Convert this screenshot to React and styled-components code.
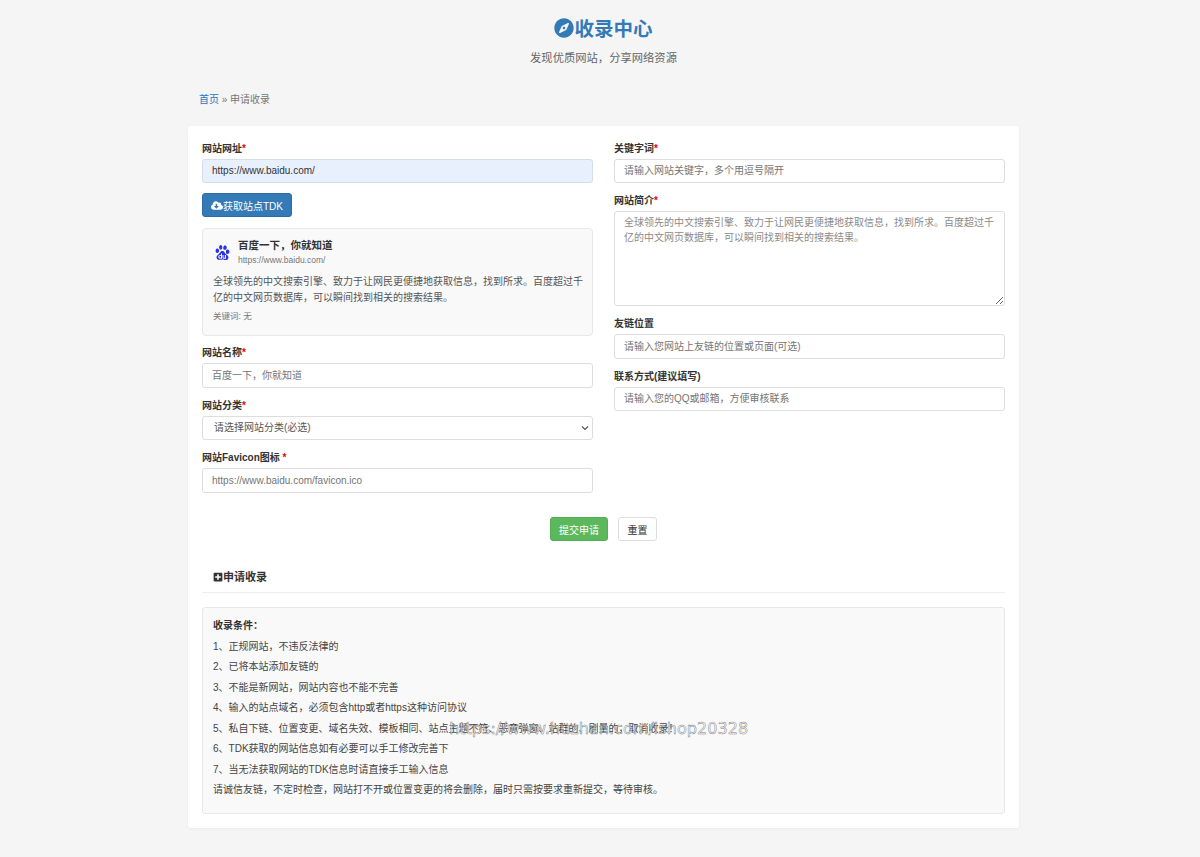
import React from 'react';
import styled, { createGlobalStyle } from 'styled-components';
import { FaCompass, FaCloudDownloadAlt, FaPlusSquare } from 'react-icons/fa';
import { SiBaidu } from 'react-icons/si';

const DESC = '全球领先的中文搜索引擎、致力于让网民更便捷地获取信息，找到所求。百度超过千亿的中文网页数据库，可以瞬间找到相关的搜索结果。';

const RULES = [
  '1、正规网站，不违反法律的',
  '2、已将本站添加友链的',
  '3、不能是新网站，网站内容也不能不完善',
  '4、输入的站点域名，必须包含http或者https这种访问协议',
  '5、私自下链、位置变更、域名失效、模板相同、站点主题不符、恶意弹窗、站群的、刷量的，取消收录！',
  '6、TDK获取的网站信息如有必要可以手工修改完善下',
  '7、当无法获取网站的TDK信息时请直接手工输入信息',
  '请诚信友链，不定时检查，网站打不开或位置变更的将会删除，届时只需按要求重新提交，等待审核。',
];

const App = () => (
  <>
    <GlobalStyle />
    <Page>
      <Header>
        <SiteTitle>
          <FaCompass size={20} />
          收录中心
        </SiteTitle>
        <Slogan>发现优质网站，分享网络资源</Slogan>
      </Header>

      <Breadcrumb>
        <a href="#home">首页</a>
        {' » 申请收录'}
      </Breadcrumb>

      <Card>
        <FormGrid>
          <Column>
            <Field $gap={10}>
              <Label>网站网址<Star>*</Star></Label>
              <Input $filled defaultValue="https://www.baidu.com/" />
            </Field>
            <FetchButton type="button">
              <FaCloudDownloadAlt size={13} />
              获取站点TDK
            </FetchButton>
            <Preview>
              <PreviewHead>
                <SiBaidu size={15} color="#2932e1" />
                <div>
                  <PreviewTitle>百度一下，你就知道</PreviewTitle>
                  <PreviewUrl>https://www.baidu.com/</PreviewUrl>
                </div>
              </PreviewHead>
              <PreviewDesc>{DESC}</PreviewDesc>
              <PreviewKeywords>关键词: 无</PreviewKeywords>
            </Preview>
            <Field>
              <Label>网站名称<Star>*</Star></Label>
              <Input placeholder="百度一下，你就知道" />
            </Field>
            <Field>
              <Label>网站分类<Star>*</Star></Label>
              <Select defaultValue="">
                <option value="">请选择网站分类(必选)</option>
              </Select>
            </Field>
            <Field>
              <Label>网站Favicon图标 <Star>*</Star></Label>
              <Input placeholder="https://www.baidu.com/favicon.ico" />
            </Field>
          </Column>

          <Column>
            <Field>
              <Label>关键字词<Star>*</Star></Label>
              <Input placeholder="请输入网站关键字，多个用逗号隔开" />
            </Field>
            <Field>
              <Label>网站简介<Star>*</Star></Label>
              <Textarea placeholder={DESC} />
            </Field>
            <Field>
              <Label>友链位置</Label>
              <Input placeholder="请输入您网站上友链的位置或页面(可选)" />
            </Field>
            <Field>
              <Label>联系方式(建议填写)</Label>
              <Input placeholder="请输入您的QQ或邮箱，方便审核联系" />
            </Field>
          </Column>
        </FormGrid>

        <Actions>
          <SubmitButton type="button">提交申请</SubmitButton>
          <ResetButton type="button">重置</ResetButton>
        </Actions>

        <SectionTitle>
          <FaPlusSquare size={10} />
          申请收录
        </SectionTitle>

        <Notice>
          <NoticeLine><strong>收录条件：</strong></NoticeLine>
          {RULES.map((rule) => <NoticeLine key={rule}>{rule}</NoticeLine>)}
        </Notice>
      </Card>

      <Watermark>https://www.huzhan.com/ishop20328</Watermark>
    </Page>
  </>
);

const GlobalStyle = createGlobalStyle`
  html, body {
    margin: 0;
    background: #f5f5f5;
  }

  body {
    font-family: "Liberation Sans", "Noto Sans CJK SC", sans-serif;
    font-size: 10px;
    color: #333;
  }

  * {
    box-sizing: border-box;
  }
`;

const Page = styled.div`
  position: relative;
  width: 1200px;
  height: 857px;
  padding: 0 181px 0 188px;
  overflow: hidden;
`;

const Header = styled.header`
  padding-top: 14px;
  text-align: center;
`;

const SiteTitle = styled.h1`
  display: flex;
  justify-content: center;
  align-items: center;
  height: 27px;
  margin: 0;
  font-size: 19.5px;
  font-weight: 700;
  color: #337ab7;
`;

const Slogan = styled.p`
  margin: 9px 0 0;
  font-size: 11.3px;
  line-height: 16px;
  color: #666;
`;

const Breadcrumb = styled.nav`
  margin-top: 27px;
  padding-left: 11px;
  line-height: 14px;
  color: #777;

  a {
    color: #2a74b8;
    text-decoration: none;
  }
`;

const Card = styled.main`
  height: 702px;
  margin-top: 19px;
  padding: 15.5px 14px 14px;
  background: #fff;
  border-radius: 3px;
  box-shadow: 0 1px 3px rgba(0, 0, 0, 0.05);
`;

const FormGrid = styled.div`
  display: grid;
  grid-template-columns: 391px 391px;
  column-gap: 21px;
`;

const Column = styled.div`
  display: flex;
  flex-direction: column;
`;

const Field = styled.div`
  margin-bottom: ${(props) => props.$gap ?? 11}px;
`;

const Label = styled.label`
  display: block;
  margin-bottom: 3px;
  line-height: 14px;
  font-weight: 700;
  color: #333;
`;

const Star = styled.span`
  color: #e00;
`;

const Input = styled.input`
  display: block;
  width: 100%;
  height: 24.5px;
  padding: 0 9px;
  font: inherit;
  color: #333;
  background: ${(props) => (props.$filled ? '#e8f0fe' : '#fff')};
  border: 1px solid ${(props) => (props.$filled ? '#d6dde8' : '#ddd')};
  border-radius: 3px;
  outline: none;

  &::placeholder {
    color: #757575;
  }
`;

const Select = styled.select`
  display: block;
  width: 100%;
  height: 24.5px;
  padding: 0 11px;
  font: inherit;
  color: #555;
  appearance: none;
  background: #fff url("data:image/svg+xml,%3Csvg xmlns='http://www.w3.org/2000/svg' width='8' height='6'%3E%3Cpath d='M1 1.5l3 3 3-3' fill='none' stroke='%23555' stroke-width='1.2'/%3E%3C/svg%3E") no-repeat right 3px center;
  border: 1px solid #ddd;
  border-radius: 3px;
  outline: none;
`;

const Textarea = styled.textarea`
  display: block;
  width: 100%;
  height: 95px;
  padding: 3px 9px;
  font: inherit;
  line-height: 15px;
  color: #333;
  background: #fff;
  border: 1px solid #ddd;
  border-radius: 3px;
  outline: none;

  &::placeholder {
    color: #8a8a8a;
  }
`;

const FetchButton = styled.button`
  display: flex;
  align-items: center;
  width: 90px;
  height: 24px;
  padding: 0 8px;
  font: inherit;
  color: #fff;
  white-space: nowrap;
  background: #337ab7;
  border: 1px solid #2e6da4;
  border-radius: 3px;
`;

const Preview = styled.section`
  height: 108px;
  margin: 11px 0 10px;
  padding: 9px 9px 9px 10px;
  background: #f9f9f9;
  border: 1px solid #e8e8e8;
  border-radius: 4px;
`;

const PreviewHead = styled.div`
  display: flex;
  align-items: center;
  gap: 8px;
  padding-left: 2px;
`;

const PreviewTitle = styled.div`
  font-size: 10.5px;
  line-height: 15px;
  font-weight: 700;
  color: #333;
`;

const PreviewUrl = styled.div`
  margin-top: 1px;
  font-size: 8.5px;
  line-height: 12px;
  color: #777;
`;

const PreviewDesc = styled.p`
  margin: 8px 0 0;
  line-height: 15.5px;
  color: #555;
`;

const PreviewKeywords = styled.div`
  margin-top: 5px;
  font-size: 8.5px;
  line-height: 12px;
  color: #777;
`;

const Actions = styled.div`
  display: flex;
  justify-content: center;
  gap: 10px;
  margin-top: 13.5px;
`;

const SubmitButton = styled.button`
  width: 58px;
  height: 24px;
  padding: 0;
  font: inherit;
  color: #fff;
  background: #5cb85c;
  border: 1px solid #55ad55;
  border-radius: 3px;
`;

const ResetButton = styled.button`
  width: 39px;
  height: 24px;
  padding: 0;
  font: inherit;
  color: #333;
  background: #fff;
  border: 1px solid #ddd;
  border-radius: 3px;
`;

const SectionTitle = styled.h2`
  display: flex;
  align-items: center;
  margin: 28px 0 14px;
  padding: 0 11px 7px;
  font-size: 11px;
  line-height: 16px;
  font-weight: 700;
  color: #333;
  border-bottom: 1px solid #eee;
`;

const Notice = styled.section`
  height: 207px;
  padding: 8px 10px;
  background: #f9f9f9;
  border: 1px solid #e8e8e8;
  border-radius: 3px;
`;

const NoticeLine = styled.div`
  line-height: 20.5px;
  color: #444;

  strong {
    color: #333;
  }
`;

const Watermark = styled.div`
  position: absolute;
  left: 449px;
  top: 719px;
  font-family: "DejaVu Sans", sans-serif;
  font-size: 16.1px;
  line-height: 20px;
  white-space: nowrap;
  color: rgba(255, 255, 255, 0.6);
  -webkit-text-stroke: 0.5px rgba(80, 80, 80, 0.75);
`;

export default App;
